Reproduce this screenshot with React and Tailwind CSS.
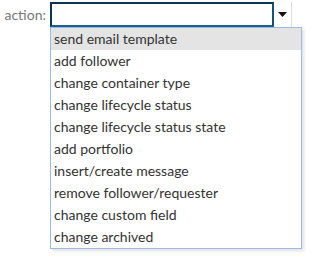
import React from 'react';

const options = [
  'send email template',
  'add follower',
  'change container type',
  'change lifecycle status',
  'change lifecycle status state',
  'add portfolio',
  'insert/create message',
  'remove follower/requester',
  'change custom field',
  'change archived',
];

const App = () => {
  return (
    <div className="w-[329px] h-[263px] bg-white font-['Lato','Liberation_Sans',sans-serif] text-[14px]">
      <div className="flex items-start pt-[2px]">
        <label className="w-[50px] pr-[4px] text-right text-[#777] leading-[25px]">action:</label>
        <div className="relative">
          <div className="flex">
            <div className="w-[224px] h-[25px] border-2 border-[#0e3550] border-b-[#1c5f8c] border-r-[#14517a] bg-white" />
            <div className="w-[18px] h-[25px] border-r border-[#dddddd] flex items-center justify-center">
              <svg width="9" height="5" viewBox="0 0 9 5">
                <path d="M0 0h9L4.5 5z" fill="#111" />
              </svg>
            </div>
          </div>
          <ul className="absolute left-0 top-[25px] w-[252px] border border-[#9bbbe6] bg-white shadow-[2px_2px_3px_rgba(0,0,0,0.12)]">
            {options.map((o, i) => (
              <li
                key={o}
                className={`h-[22px] leading-[22px] pl-[3px] text-[#333] ${i === 0 ? 'bg-[#e4e4e4]' : ''}`}
              >
                {o}
              </li>
            ))}
          </ul>
        </div>
      </div>
    </div>
  );
};

export default App;
